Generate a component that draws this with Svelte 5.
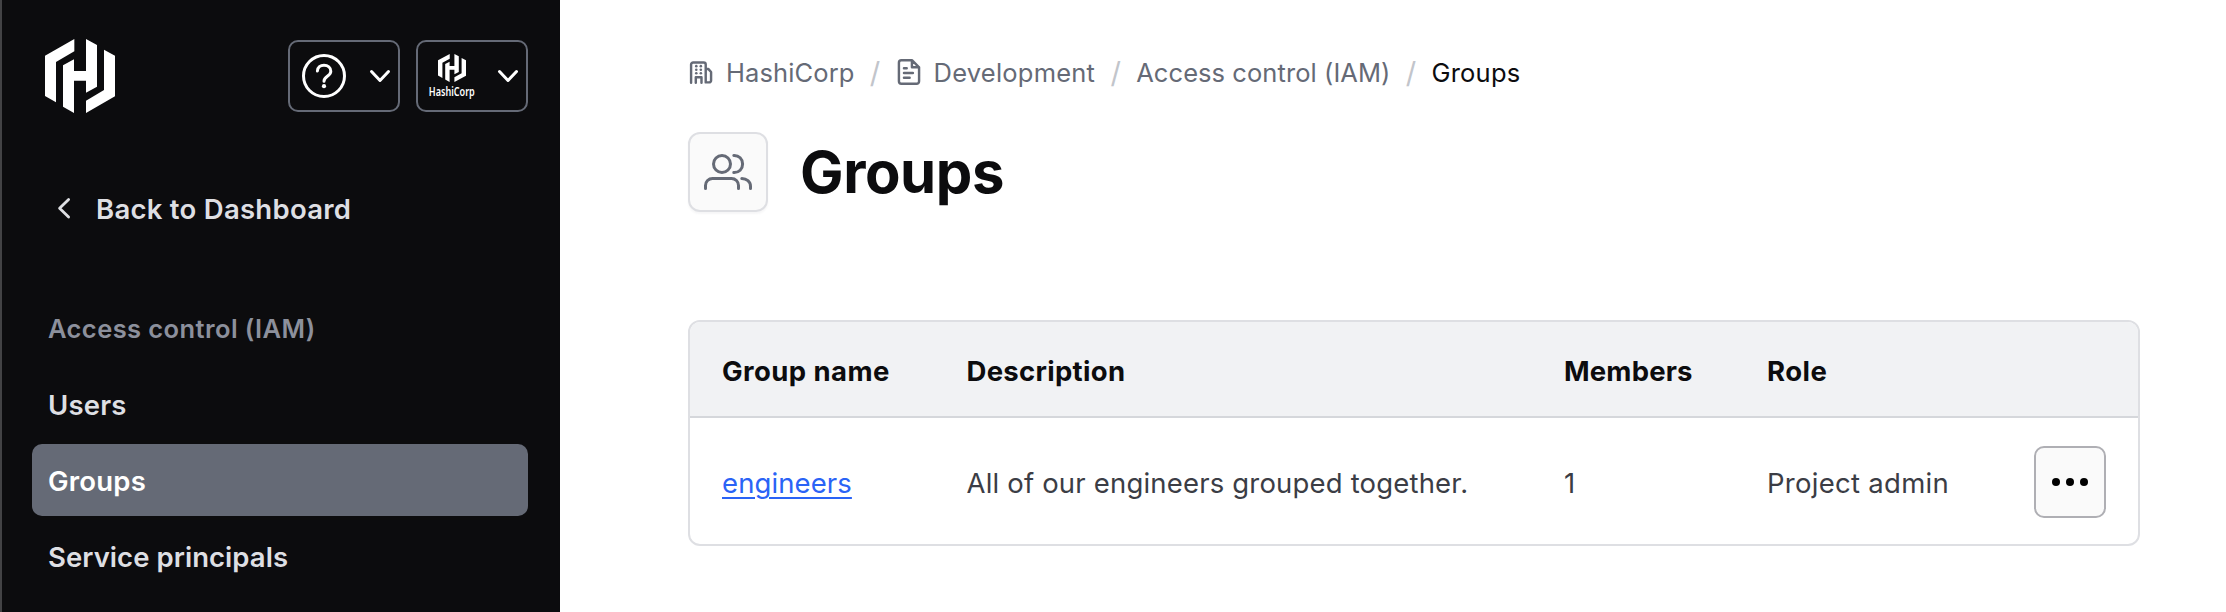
<script>
  const navItems = [
    { label: 'Users', cls: 'w-users' },
    { label: 'Groups', cls: 'w-users', active: true },
    { label: 'Service principals', cls: 'w-service' }
  ];
  const columns = [
    { label: 'Group name', cls: 'name' },
    { label: 'Description', cls: 'desc' },
    { label: 'Members', cls: 'members' },
    { label: 'Role', cls: 'role' }
  ];
  const groups = [
    { name: 'engineers', description: 'All of our engineers grouped together.', members: 1, role: 'Project admin' }
  ];
</script>

{#snippet mark(cls)}
  <svg class={cls} viewBox="135 117 210 222" preserveAspectRatio="none" fill="#fff" aria-hidden="true">
    <path d="M135 167 223 117V154L168 186V307L135 288Z" />
    <path d="M189 196 222 178V213H258V117L291 135V260L258 278V242H222V339L189 320Z" />
    <path d="M312 149 345 167V289L258 339V302L312 270Z" />
  </svg>
{/snippet}

{#snippet chevron()}
  <svg class="chevron" viewBox="0 0 24 24" fill="none" stroke="#fff" stroke-width="3" stroke-linecap="round" stroke-linejoin="round" aria-hidden="true">
    <path d="M3.5 7.5 12 16.5 20.5 7.5" />
  </svg>
{/snippet}

<div class="page">
  <aside class="sidebar">
    <header class="top">
      {@render mark('logo')}
      <div class="switchers">
        <button class="dropdown" aria-label="Help">
          <svg class="help" viewBox="0 0 24 24" fill="none" stroke="#fff" stroke-width="1.5" stroke-linecap="round" aria-hidden="true">
            <circle cx="12" cy="12" r="10.25" />
            <path d="M8.7 9.5C8.8 7.7 10.2 6.6 12 6.6c1.9 0 3.4 1.2 3.4 3 0 2.6-3.4 2.5-3.4 5" />
            <circle cx="12" cy="17.1" r="1.05" fill="#fff" stroke="none" />
          </svg>
          {@render chevron()}
        </button>
        <button class="dropdown">
          <span class="org">
            {@render mark('org-logo')}
            <svg class="org-name" viewBox="0 0 48 18" aria-hidden="true">
              <text x="0.8" y="12" textLength="46" lengthAdjust="spacingAndGlyphs">HashiCorp</text>
            </svg>
          </span>
          {@render chevron()}
        </button>
      </div>
    </header>

    <nav>
      <div class="item back">
        <svg class="back-icon" viewBox="0 0 32 32" fill="none" stroke="#dedfe3" stroke-width="2.8" stroke-linecap="round" stroke-linejoin="round" aria-hidden="true">
          <path d="M20.6 7.4 11.6 16.2 20.6 25" />
        </svg>
        <span>Back to Dashboard</span>
      </div>
      <div class="item heading">Access control (IAM)</div>
      {#each navItems as item}
        <div class="item {item.cls}" class:active={item.active}>{item.label}</div>
      {/each}
    </nav>
  </aside>

  <main>
    <div class="crumbs">
      <svg class="crumb-icon" viewBox="0 0 16 16" fill="none" stroke="#656a76" stroke-width="1.5" stroke-linecap="round" stroke-linejoin="round" aria-hidden="true">
        <path d="M1.9 14.6V3.4a1.3 1.3 0 0 1 1.3-1.3H9.6a1.3 1.3 0 0 1 1.3 1.3V14.4H13a1.2 1.2 0 0 0 1.2-1.2V8L12.6 6.2H10.9M4.8 14.6V11.2H8.3V14.6" />
        <g fill="#656a76" stroke="none">
          <circle cx="5.1" cy="4.4" r=".8" /><circle cx="7.9" cy="4.4" r=".8" />
          <circle cx="5.1" cy="6.6" r=".8" /><circle cx="7.9" cy="6.6" r=".8" />
          <circle cx="5.1" cy="8.8" r=".8" /><circle cx="7.9" cy="8.8" r=".8" />
        </g>
      </svg>
      <span class="crumb hashi">HashiCorp</span>
      <span class="sep">/</span>
      <svg class="crumb-icon" viewBox="0 0 16 16" fill="none" stroke="#656a76" stroke-width="1.5" stroke-linecap="round" stroke-linejoin="round" aria-hidden="true">
        <path d="M9.8.75H3.3a1.5 1.5 0 0 0-1.5 1.5v11.5a1.5 1.5 0 0 0 1.5 1.5h9.4a1.5 1.5 0 0 0 1.5-1.5V5.1ZM9.8.75V5.1h4.4M4.9 5.7H6.6M4.9 8.6H10.4M4.9 11.5H8.4" />
      </svg>
      <span class="crumb dev">Development</span>
      <span class="sep">/</span>
      <span class="crumb iam">Access control (IAM)</span>
      <span class="sep">/</span>
      <span class="crumb current">Groups</span>
    </div>

    <div class="title">
      <div class="tile">
        <svg viewBox="0 0 24 24" fill="none" stroke="#656a76" stroke-width="1.5" stroke-linecap="round" stroke-linejoin="round" aria-hidden="true">
          <circle cx="9" cy="8" r="4.25" />
          <path d="M.75 20.25v-1.5a3.5 3.5 0 0 1 3.5-3.5h9.5a3.5 3.5 0 0 1 3.5 3.5v1.5" />
          <path d="M14.9 3.75c2.6-.1 4.4 1.7 4.4 4.25s-1.8 4.35-4.4 4.25" />
          <path d="M18.9 15.25c2.4 0 4.35 1.6 4.35 3.9v1.1" />
        </svg>
      </div>
      <h1>Groups</h1>
    </div>

    <section class="table">
      <div class="row head">
        {#each columns as col}
          <div class="cell {col.cls}">{col.label}</div>
        {/each}
      </div>
      {#each groups as group}
        <div class="row body">
          <div class="cell link"><a href="#engineers">{group.name}</a></div>
          <div class="cell text">{group.description}</div>
          <div class="cell">{group.members}</div>
          <div class="cell access">{group.role}</div>
          <button class="more" aria-label="More">
            <svg viewBox="0 0 40 40" fill="#000" aria-hidden="true">
              <circle cx="6" cy="20" r="4" /><circle cx="20" cy="20" r="4" /><circle cx="34" cy="20" r="4" />
            </svg>
          </button>
        </div>
      {/each}
    </section>
  </main>
</div>

<style>
  :global(body) { background: #fff; }
  .page {
    display: flex;
    width: 2226px;
    height: 612px;
    overflow: hidden;
    font-family: Inter, 'Liberation Sans', sans-serif;
    font-size: 27.5px;
    font-weight: 400;
    box-sizing: border-box;
  }
  .page *, .page { box-sizing: border-box; }
  svg { display: block; flex: none; }
  button { font: inherit; cursor: pointer; margin: 0; }

  .sidebar {
    width: 560px;
    flex: none;
    background: #0c0c0e;
    border-left: 2px solid #434345;
    padding: 39px 32px 0 30px;
  }
  .top {
    display: flex;
    justify-content: space-between;
    height: 133px;
    padding-left: 13px;
  }
  .logo { width: 70px; height: 74px; }
  .switchers { display: flex; gap: 16px; padding-top: 1px; }
  .dropdown {
    display: flex;
    align-items: center;
    gap: 20px;
    width: 112px;
    height: 72px;
    padding: 0 0 0 10px;
    border: 2px solid #656a76;
    border-radius: 10px;
    background: #0c0c0e;
  }
  .help { width: 48px; height: 48px; }
  .chevron { width: 24px; height: 24px; }
  .org { display: flex; flex-direction: column; align-items: center; width: 48px; height: 48px; padding-top: 2px; gap: 2px; }
  .org-logo { width: 28px; height: 28px; }
  .org-name { width: 48px; height: 18px; overflow: visible; }
  .org-name text { font: 600 12px 'Noto Sans', sans-serif; fill: #fff; }

  nav { display: flex; flex-direction: column; gap: 4px; }
  .item {
    height: 72px;
    line-height: 74px;
    padding-left: 16px;
    border-radius: 10px;
    color: #dedfe3;
    font-weight: 600;
    white-space: nowrap;
  }
  .back { display: flex; align-items: center; gap: 16px; margin-bottom: 44px; letter-spacing: .27px; }
  .back span { padding-top: 2px; }
  .back-icon { width: 32px; height: 32px; }
  .heading { font-size: 25.5px; color: #8c909c; letter-spacing: .42px; }
  .w-users { letter-spacing: .2px; }
  .w-service { letter-spacing: .05px; }
  .active { background: #656a76; color: #fff; }

  main { width: 1580px; padding: 52px 0 0 128px; }
  .crumbs {
    display: flex;
    align-items: center;
    height: 40px;
    font-size: 25.5px;
    line-height: 40px;
    color: #656a76;
    white-space: nowrap;
  }
  .crumb-icon { width: 26px; height: 26px; margin-right: 12px; }
  .crumb { padding-top: 1px; }
  .sep { width: 13px; margin: 0 14px; padding-top: 2px; text-align: center; font-size: 29px; color: #c2c5cb; }
  .hashi { letter-spacing: .12px; }
  .dev { letter-spacing: .22px; }
  .iam { letter-spacing: .07px; }
  .current { letter-spacing: .22px; color: #0c0c0e; }

  .title { display: flex; align-items: center; gap: 32px; margin-top: 40px; }
  .tile {
    display: grid;
    place-items: center;
    width: 80px;
    height: 80px;
    border: 2px solid #dedfe3;
    border-radius: 12px;
    background: #fafafa;
    box-shadow: 0 2px 2px rgba(101, 106, 118, .06);
  }
  .tile svg { width: 48px; height: 48px; }
  h1 { margin: 0; font-size: 58px; line-height: 80px; font-weight: 700; letter-spacing: -.4px; color: #0c0c0e; }

  .table {
    width: 1452px;
    margin-top: 108px;
    border: 2px solid #dedfe3;
    border-radius: 12px;
    overflow: hidden;
  }
  .row { display: grid; grid-template-columns: 244.5px 597.5px 203px 268px auto; }
  .cell { padding-left: 32px; white-space: nowrap; }
  .head {
    height: 96px;
    line-height: 98px;
    background: #f1f2f4;
    border-bottom: 2px solid #d5d7db;
    font-weight: 650;
    color: #0c0c0e;
  }
  .name { letter-spacing: .42px; }
  .desc { letter-spacing: .3px; }
  .members { letter-spacing: .18px; }
  .role { letter-spacing: .45px; }
  .body { height: 126px; line-height: 130px; color: #3b3d45; }
  .link { letter-spacing: .1px; }
  .link a {
    color: #2a63f6;
    text-decoration: underline;
    text-decoration-thickness: 2px;
    text-underline-offset: 4px;
  }
  .text { letter-spacing: .18px; }
  .access { letter-spacing: .28px; }
  .more {
    display: grid;
    place-items: center;
    width: 72px;
    height: 72px;
    margin: 28px 0 0 31px;
    padding: 0;
    border: 2px solid #afafb4;
    border-radius: 10px;
    background: #fafafa;
  }
  .more svg { width: 40px; height: 40px; }
</style>
